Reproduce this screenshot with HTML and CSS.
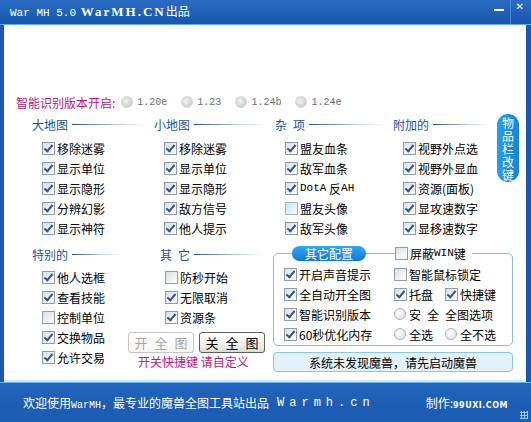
FILE: index.html
```html
<!DOCTYPE html>
<html lang="zh-CN">
<head>
    <meta charset="UTF-8">
    <title>War MH 5.0</title>
    <link rel="stylesheet" href="styles.css">
</head>
<body>

<div class="window">
    <div class="titlebar">
        <span class="title"><span class="ver">War MH 5.0</span> <b class="site">WarMH.CN</b>出品</span>
        <div class="controls">
            <span class="btn-min"></span>
            <span class="btn-sep"></span>
            <span class="btn-close">✕</span>
        </div>
    </div>

    <div class="client">
        <div class="version-row">
            <span class="version-label">智能识别版本开启:</span>
            <label class="radio-v"><span class="dot"></span>1.20e</label>
            <label class="radio-v"><span class="dot"></span>1.23</label>
            <label class="radio-v"><span class="dot"></span>1.24b</label>
            <label class="radio-v"><span class="dot"></span>1.24e</label>
        </div>

        <div class="top-groups">
            <div class="group">
                <div class="group-head">大地图</div>
                <div class="items">
                    <label class="chk"><span class="box on"></span>移除迷雾</label>
                    <label class="chk"><span class="box on"></span>显示单位</label>
                    <label class="chk"><span class="box on"></span>显示隐形</label>
                    <label class="chk"><span class="box on"></span>分辨幻影</label>
                    <label class="chk"><span class="box on"></span>显示神符</label>
                </div>
            </div>
            <div class="group">
                <div class="group-head">小地图</div>
                <div class="items">
                    <label class="chk"><span class="box on"></span>移除迷雾</label>
                    <label class="chk"><span class="box on"></span>显示单位</label>
                    <label class="chk"><span class="box on"></span>显示隐形</label>
                    <label class="chk"><span class="box on"></span>敌方信号</label>
                    <label class="chk"><span class="box on"></span>他人提示</label>
                </div>
            </div>
            <div class="group">
                <div class="group-head">杂&ensp;项</div>
                <div class="items">
                    <label class="chk"><span class="box on"></span>盟友血条</label>
                    <label class="chk"><span class="box on"></span>敌军血条</label>
                    <label class="chk"><span class="box on"></span><span class="mono">DotA</span>&nbsp;反<span class="mono">AH</span></label>
                    <label class="chk"><span class="box hover"></span>盟友头像</label>
                    <label class="chk"><span class="box on"></span>敌军头像</label>
                </div>
            </div>
            <div class="group">
                <div class="group-head">附加的</div>
                <div class="items">
                    <label class="chk"><span class="box on"></span>视野外点选</label>
                    <label class="chk"><span class="box on"></span>视野外显血</label>
                    <label class="chk"><span class="box on"></span>资源(面板)</label>
                    <label class="chk"><span class="box on"></span>显攻速数字</label>
                    <label class="chk"><span class="box on"></span>显移速数字</label>
                </div>
            </div>
            <div class="side-pill"><span>物</span><span>品</span><span>栏</span><span>改</span><span>键</span></div>
        </div>

        <div class="lower">
            <div class="group special">
                <div class="group-head">特别的</div>
                <div class="items">
                    <label class="chk"><span class="box on"></span>他人选框</label>
                    <label class="chk"><span class="box on"></span>查看技能</label>
                    <label class="chk"><span class="box"></span>控制单位</label>
                    <label class="chk"><span class="box on"></span>交换物品</label>
                    <label class="chk"><span class="box on"></span>允许交易</label>
                </div>
            </div>
            <div class="group other">
                <div class="group-head">其&ensp;它</div>
                <div class="items">
                    <label class="chk"><span class="box"></span>防秒开始</label>
                    <label class="chk"><span class="box on"></span>无限取消</label>
                    <label class="chk"><span class="box on"></span>资源条</label>
                </div>
                <div class="map-buttons">
                    <button class="btn" disabled>开 全 图</button>
                    <button class="btn">关 全 图</button>
                </div>
                <div class="hotkey-note">开关快捷键 请自定义</div>
            </div>
            <div class="config-col">
                <fieldset class="config">
                    <legend>
                        <span class="pill">其它配置</span>
                        <span class="legend-line"></span>
                        <label class="chk win"><span class="box"></span>屏蔽<span class="mono">WIN</span>键</label>
                    </legend>
                    <div class="config-grid">
                        <label class="chk"><span class="box on"></span>开启声音提示</label>
                        <label class="chk"><span class="box"></span>智能鼠标锁定</label>
                        <label class="chk"><span class="box on"></span>全自动开全图</label>
                        <div class="pair">
                            <label class="chk"><span class="box on"></span>托盘</label>
                            <label class="chk"><span class="box on"></span>快捷键</label>
                        </div>
                        <label class="chk"><span class="box on"></span>智能识别版本</label>
                        <label class="rad"><span class="circle"></span>安&ensp;全&ensp;全图选项</label>
                        <label class="chk"><span class="box on"></span>60秒优化内存</label>
                        <div class="pair">
                            <label class="rad"><span class="circle"></span>全选</label>
                            <label class="rad"><span class="circle"></span>全不选</label>
                        </div>
                    </div>
                </fieldset>
                <div class="status">系统未发现魔兽，请先启动魔兽</div>
            </div>
        </div>
    </div>

    <div class="footer">
        <span class="welcome">欢迎使用<span class="mono-s">WarMH</span>，最专业的魔兽全图工具站出品</span>
        <span class="domain">Warmh.cn</span>
        <span class="maker">制作:<b>99UXI.COM</b></span>
        <span class="grip"></span>
    </div>
</div>

</body>
</html>
```

FILE: styles.css
```css
body {
    margin: 0;
    font-family: "Noto Sans CJK SC", sans-serif;
    font-size: 12px;
    color: #000;
}
.window {
    width: 531px;
    height: 422px;
    background-color: #1c57ac;
    display: flex;
    flex-direction: column;
    overflow: hidden;
}

/* title bar */
.titlebar {
    height: 25px;
    box-sizing: border-box;
    display: flex;
    align-items: center;
    padding-left: 10px;
    color: #fff;
    background: linear-gradient(#2a6cc4, #1d5cb4 70%, #1a56aa);
    border-bottom: 1px solid #5cb2ee;
}
.title {
    font-size: 12px;
    line-height: 14px;
    white-space: nowrap;
}
.ver {
    font-family: "Liberation Mono", monospace;
    font-size: 11px;
}
.site {
    font-family: "Liberation Serif", serif;
    font-size: 13px;
    letter-spacing: 2px;
    margin-left: 2px;
}
.controls {
    margin-left: auto;
    align-self: stretch;
    display: flex;
    align-items: flex-start;
}
.btn-min {
    width: 10px;
    height: 2px;
    background: #fff;
    margin: 9px 6px 0 0;
}
.btn-sep {
    width: 1px;
    align-self: stretch;
    background: #4a86d0;
    margin-right: 5px;
}
.btn-close {
    color: #fff;
    font-family: "DejaVu Sans", sans-serif;
    font-size: 10px;
    font-weight: bold;
    line-height: 10px;
    margin: 2px 7px 0 0;
}

/* white client area */
.client {
    flex: 1;
    margin: 0 5px 0 4px;
    background-color: #fff;
    padding: 68px 7px 0 12px;
    border-bottom: 2px solid #dde8f3;
}
.version-row {
    height: 18px;
    display: flex;
    align-items: center;
}
.version-label {
    color: #c0167e;
    margin-right: 6px;
}
.radio-v {
    display: flex;
    align-items: center;
    font-family: "Liberation Mono", monospace;
    font-size: 10px;
    color: #6c6c6c;
    margin-right: 14px;
}
.dot {
    width: 10px;
    height: 10px;
    border-radius: 50%;
    background: radial-gradient(circle at 40% 40%, #f4f4f4, #cfcfcf 70%);
    border: 1px solid #d6d6d6;
    margin-right: 4px;
}

/* checkbox groups */
.top-groups {
    display: grid;
    grid-template-columns: 122px 121px 118px 104px 22px;
    margin: 4px 0 0 16px;
}
.group-head {
    height: 18px;
    display: flex;
    align-items: center;
    color: #1f4f95;
    white-space: nowrap;
}
.group-head::after {
    content: "";
    flex: 1;
    height: 1px;
    margin: 0 8px 0 4px;
    background: linear-gradient(90deg, #24528f, #b7c9e0 60%, rgba(255, 255, 255, 0));
}
.items {
    padding: 5px 0 0 10px;
}
.chk, .rad {
    height: 20px;
    display: flex;
    align-items: center;
    white-space: nowrap;
}
.box {
    position: relative;
    box-sizing: border-box;
    width: 13px;
    height: 13px;
    border: 1px solid #8f9caa;
    background: linear-gradient(135deg, #d9dee4, #f7f8f9 75%);
    margin-right: 2px;
    flex-shrink: 0;
}
.box.on::after {
    content: "";
    position: absolute;
    left: 3px;
    top: 0px;
    width: 3px;
    height: 7px;
    border: solid #2f5490;
    border-width: 0 2px 2px 0;
    transform: rotate(40deg);
}
.box.hover {
    border-color: #9fb4c8;
    background: linear-gradient(135deg, #c8e2f6, #eef7fd 80%);
}
.mono {
    font-family: "Liberation Mono", monospace;
    font-size: 11px;
}

/* vertical blue button, one character per line */
.side-pill {
    align-self: start;
    margin-top: -1px;
    width: 22px;
    height: 68px;
    box-sizing: border-box;
    border-radius: 11px;
    background: linear-gradient(90deg, #2a9ceb, #1284dc);
    color: #fff;
    font-size: 12px;
    line-height: 13px;
    padding-top: 2px;
    display: flex;
    flex-direction: column;
    align-items: center;
}

/* lower half */
.lower {
    display: flex;
    margin: 7px 0 0 16px;
}
.special {
    width: 96px;
}
.special .items {
    padding-top: 4px;
}
.other {
    width: 144px;
}
.other .group-head {
    padding-left: 32px;
}
.other .items {
    padding: 4px 0 0 37px;
}
.map-buttons {
    display: flex;
    gap: 5px;
    margin-top: 5px;
}
.btn {
    width: 66px;
    height: 21px;
    padding: 0;
    font-family: "Noto Sans CJK SC", sans-serif;
    font-size: 13px;
    line-height: 19px;
    word-spacing: 4px;
    border: 1px solid #5e5e5e;
    border-radius: 3px;
    background: linear-gradient(#fff, #f0f0ee 60%, #dcdcd6);
    color: #000;
    white-space: nowrap;
}
.btn:disabled {
    border-color: #c5c5c5;
    color: #a6a6a6;
    background: linear-gradient(#fff, #f5f5f3);
}
.hotkey-note {
    color: #c0167e;
    padding: 2px 0 0 10px;
    line-height: 14px;
}

.config-col {
    width: 240px;
    margin-left: 1px;
}
.config {
    margin: 0;
    padding: 0 0 1px 10px;
    border: 1px solid #86bde6;
    border-radius: 5px;
}
.config legend {
    display: flex;
    align-items: center;
    padding: 0;
    margin-left: 8px;
    height: 16px;
}
.pill {
    width: 74px;
    height: 15px;
    line-height: 15px;
    border-radius: 8px;
    text-align: center;
    color: #fff;
    background: linear-gradient(#34a6ee, #0f7ad4);
}
.legend-line {
    width: 29px;
    height: 1px;
    background: #86bde6;
}
.chk.win {
    padding: 0 6px 0 0;
}
.config-grid {
    display: grid;
    grid-template-columns: 110px 1fr;
    padding-top: 3px;
}
.pair {
    display: flex;
}
.pair > :first-child {
    width: 51px;
}
.circle {
    box-sizing: border-box;
    width: 12px;
    height: 12px;
    border-radius: 50%;
    border: 1px solid #a9b2bb;
    background: radial-gradient(circle at 40% 40%, #fff, #e1e4e8 75%);
    margin-right: 3px;
}
.status {
    margin-top: 6px;
    height: 20px;
    line-height: 19px;
    box-sizing: border-box;
    text-align: center;
    border: 1px solid #8cc3ea;
    border-radius: 4px;
    background: #e2f1fc;
}

/* footer */
.footer {
    height: 40px;
    box-sizing: border-box;
    display: flex;
    align-items: center;
    padding: 0 0 0 23px;
    color: #fff;
    background: linear-gradient(#2466be, #1d5cb3 60%, #1e5fb6);
    border-top: 1px solid #69b9ef;
    position: relative;
}
.mono-s {
    font-family: "Liberation Mono", monospace;
    font-size: 10px;
}
.domain {
    font-family: "Liberation Mono", monospace;
    font-size: 12px;
    letter-spacing: 5px;
    margin-left: 8px;
}
.maker {
    margin-left: auto;
    margin-right: 23px;
}
.maker b {
    font-family: "DejaVu Sans", sans-serif;
    font-size: 8px;
    letter-spacing: 0.5px;
}
.grip {
    position: absolute;
    right: 3px;
    bottom: 3px;
    width: 8px;
    height: 8px;
    background: radial-gradient(circle, #9cc6ee 1px, transparent 1.2px) 0 0 / 3px 3px;
}
```
